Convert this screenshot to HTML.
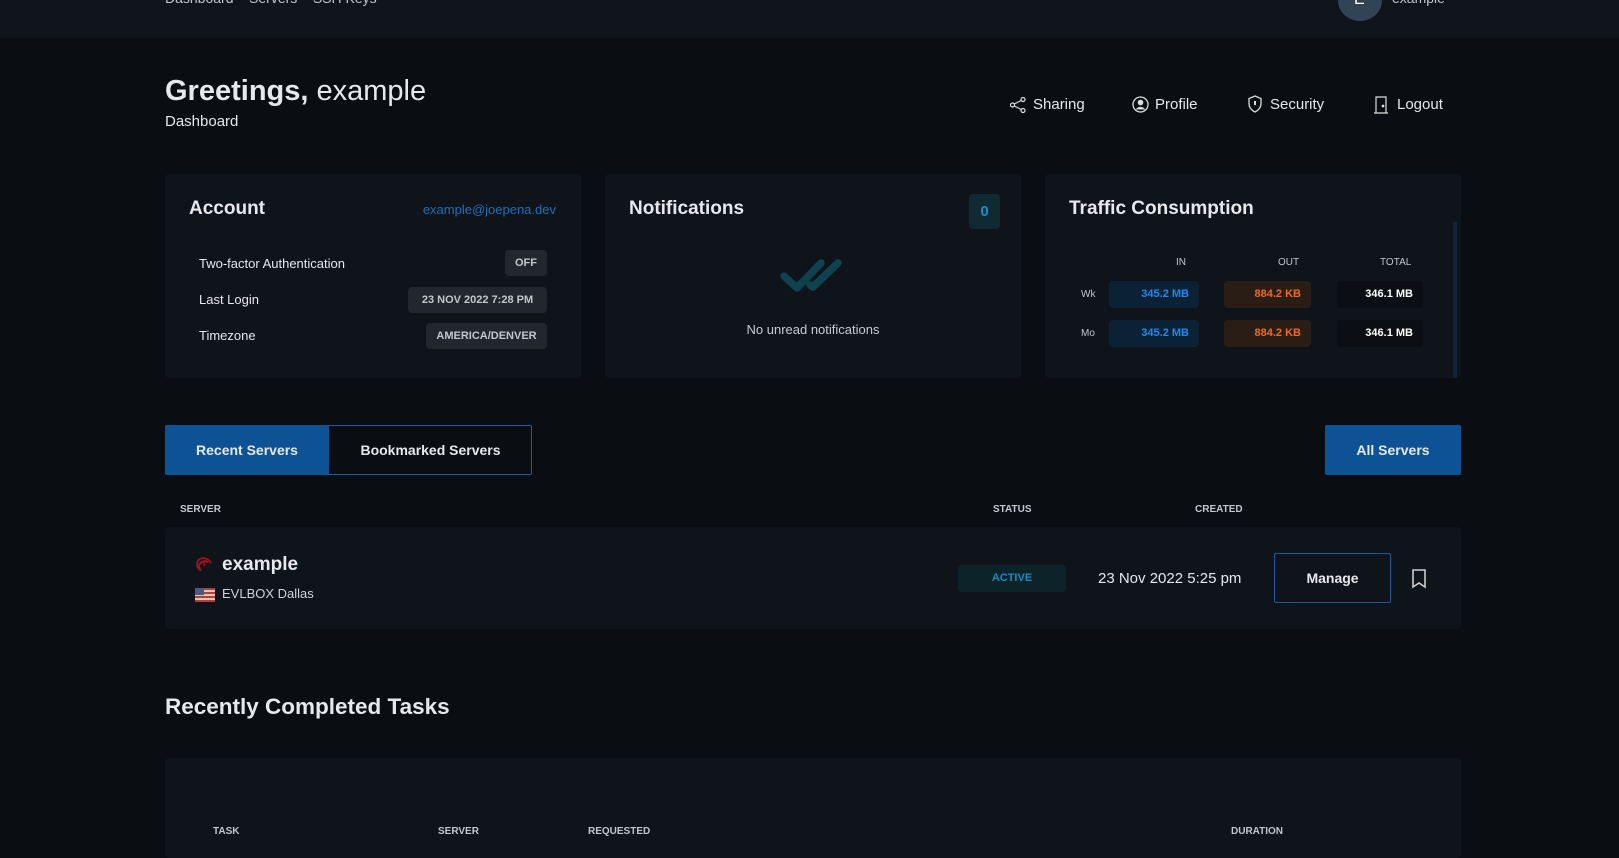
<!DOCTYPE html>
<html><head><meta charset="utf-8"><style>
*{margin:0;padding:0;box-sizing:border-box}
body{width:1619px;height:843px;overflow:hidden;background:#0a0d12;font-family:"Liberation Sans",sans-serif;color:#e6e8eb;position:relative}
.a{position:absolute;white-space:nowrap}
.card{position:absolute;background:#0f131a;border-radius:4px}
.badge{position:absolute;height:26px;line-height:26px;background:#22262e;border-radius:4px;color:#c3c6cc;font-weight:bold;font-size:11px;text-align:center}
.pill{position:absolute;height:27px;line-height:27px;border-radius:4px;font-weight:bold;font-size:11px;text-align:right;padding-right:10px}
.th{font-size:10px;font-weight:bold;color:#c3c6cc}
.nav{font-size:15px;color:#e6e8eb}
</style></head><body>
<div class="a" style="left:0;top:0;width:1619px;height:38px;background:#10141b"></div>
<div class="a" style="left:165px;top:-10px;font-size:14px;color:#c3c6cc">Dashboard&nbsp;&nbsp;&nbsp;&nbsp;Servers&nbsp;&nbsp;&nbsp;&nbsp;SSH Keys</div>
<div class="a" style="left:1338px;top:-20px;width:44px;height:41px;border-radius:50%;background:#334356"></div>
<div class="a" style="left:1354px;top:-9px;font-size:16px;color:#fff">E</div>
<div class="a" style="left:1392px;top:-10px;font-size:14px;color:#c3c6cc">example</div>

<div class="a" style="left:165px;top:75px;font-size:29px"><b>Greetings,</b> example</div>
<div class="a" style="left:165px;top:113px;font-size:15px">Dashboard</div>

<svg class="a" style="left:1009px;top:96px" width="18" height="18" viewBox="0 0 18 18" fill="none" stroke="#ddd" stroke-width="1.2"><circle cx="14" cy="3.5" r="2"/><circle cx="3.5" cy="9" r="2"/><circle cx="14" cy="14.5" r="2"/><path d="M5.3 8 12.2 4.5M5.3 10 12.2 13.5"/></svg>
<div class="a nav" style="left:1033px;top:96px">Sharing</div>
<svg class="a" style="left:1132px;top:96px" width="17" height="17" viewBox="0 0 17 17"><circle cx="8.5" cy="8.5" r="7.5" fill="none" stroke="#ddd" stroke-width="1.3"/><circle cx="8.5" cy="6.5" r="2.8" fill="#ddd"/><path d="M3.5 13.5Q8.5 8 13.5 13.5" fill="#ddd"/></svg>
<div class="a nav" style="left:1155px;top:96px">Profile</div>
<svg class="a" style="left:1247px;top:95px" width="16" height="18" viewBox="0 0 16 18" fill="none" stroke="#ddd" stroke-width="1.3"><path d="M8 1 14 3.5V8.5Q14 14 8 17Q2 14 2 8.5V3.5Z"/><path d="M8 6v4" stroke-width="2"/></svg>
<div class="a nav" style="left:1270px;top:96px">Security</div>
<svg class="a" style="left:1374px;top:96px" width="14" height="18" viewBox="0 0 14 18" fill="none" stroke="#ddd" stroke-width="1.2"><path d="M2 17V1h10v16M0 17h14"/><circle cx="9" cy="10" r=".8" fill="#ddd"/></svg>
<div class="a nav" style="left:1397px;top:96px">Logout</div>

<div class="card" style="left:165px;top:174px;width:416px;height:204px"></div>
<div class="a" style="left:189px;top:198px;font-size:19px;font-weight:bold">Account</div>
<div class="a" style="right:1063px;top:202px;font-size:13px;color:#1e6fb5">example@joepena.dev</div>
<div class="a" style="left:199px;top:256px;font-size:13px">Two-factor Authentication</div>
<div class="a" style="left:199px;top:292px;font-size:13px">Last Login</div>
<div class="a" style="left:199px;top:328px;font-size:13px">Timezone</div>
<div class="badge" style="left:505px;top:250px;width:42px">OFF</div>
<div class="badge" style="left:408px;top:287px;width:139px">23 NOV 2022 7:28 PM</div>
<div class="badge" style="left:426px;top:323px;width:121px">AMERICA/DENVER</div>

<div class="card" style="left:605px;top:174px;width:416px;height:204px"></div>
<div class="a" style="left:629px;top:198px;font-size:19px;font-weight:bold">Notifications</div>
<div class="a" style="left:969px;top:194px;width:31px;height:35px;line-height:35px;text-align:center;background:#0f2a33;border-radius:4px;color:#1a8cc4;font-weight:bold;font-size:15px">0</div>
<svg class="a" style="left:780px;top:258px" width="68" height="40" viewBox="0 0 68 40" fill="none" stroke="#0f4250" stroke-width="7.5" stroke-linecap="round" stroke-linejoin="round"><path d="M4 18 17 30 41 5"/><path d="M30 27 33 29 58 5"/></svg>
<div class="a" style="left:605px;width:416px;text-align:center;top:322px;font-size:13px;color:#c8ccd2">No unread notifications</div>

<div class="card" style="left:1045px;top:174px;width:416px;height:204px"></div>
<div class="a" style="left:1453px;top:222px;width:4px;height:156px;background:#13243a"></div>
<div class="a" style="left:1069px;top:198px;font-size:19px;font-weight:bold">Traffic Consumption</div>
<div class="a" style="left:1176px;top:257px;font-size:10px;color:#c3c6cc">IN</div>
<div class="a" style="left:1278px;top:257px;font-size:10px;color:#c3c6cc">OUT</div>
<div class="a" style="left:1380px;top:257px;font-size:10px;color:#c3c6cc">TOTAL</div>
<div class="a" style="left:1081px;top:289px;font-size:10px;color:#c3c6cc">Wk</div>
<div class="a" style="left:1081px;top:328px;font-size:10px;color:#c3c6cc">Mo</div>
<div class="pill" style="left:1109px;top:281px;width:90px;background:#0b2136;color:#1a8cf0">345.2 MB</div>
<div class="pill" style="left:1224px;top:281px;width:87px;background:#2a1d16;color:#f06a1a">884.2 KB</div>
<div class="pill" style="left:1337px;top:281px;width:86px;background:#0b0e12;color:#fff">346.1 MB</div>
<div class="pill" style="left:1109px;top:320px;width:90px;background:#0b2136;color:#1a8cf0">345.2 MB</div>
<div class="pill" style="left:1224px;top:320px;width:87px;background:#2a1d16;color:#f06a1a">884.2 KB</div>
<div class="pill" style="left:1337px;top:320px;width:86px;background:#0b0e12;color:#fff">346.1 MB</div>

<div class="a" style="left:165px;top:425px;width:367px;height:50px;border:1px solid #1660a8;border-radius:2px"></div>
<div class="a" style="left:165px;top:425px;width:164px;height:50px;background:#0e5296;border-radius:2px 0 0 2px;line-height:50px;text-align:center;font-weight:bold;font-size:14px">Recent Servers</div>
<div class="a" style="left:329px;top:425px;width:203px;height:50px;line-height:50px;text-align:center;font-weight:bold;font-size:14px">Bookmarked Servers</div>
<div class="a" style="left:1325px;top:425px;width:136px;height:50px;background:#0e5296;border-radius:2px;line-height:50px;text-align:center;font-weight:bold;font-size:14px">All Servers</div>

<div class="a th" style="left:180px;top:504px">SERVER</div>
<div class="a th" style="left:993px;top:504px">STATUS</div>
<div class="a th" style="left:1195px;top:504px">CREATED</div>

<div class="card" style="left:165px;top:527px;width:1296px;height:102px"></div>
<svg class="a" style="left:195px;top:555px" width="19" height="19" viewBox="0 0 19 19" fill="none" stroke="#a0141e" stroke-width="1.8"><path d="M10 10.5a2.3 2.3 0 1 1 3-3A5 5 0 1 0 6 15.5 7 7 0 0 1 4 4.5a8 8 0 0 1 12 4"/></svg>
<div class="a" style="left:222px;top:554px;font-size:19px;font-weight:bold">example</div>
<svg class="a" style="left:195px;top:588px" width="20" height="14" viewBox="0 0 20 14"><rect width="20" height="14" fill="#d9c9b0"/><g fill="#b04040"><rect y="0" width="20" height="2"/><rect y="4" width="20" height="2"/><rect y="8" width="20" height="2"/><rect y="12" width="20" height="2"/></g><rect width="9" height="7" fill="#4a5a80"/></svg>
<div class="a" style="left:222px;top:586px;font-size:13px;color:#d0d3d8">EVLBOX Dallas</div>
<div class="a" style="left:958px;top:565px;width:108px;height:27px;line-height:27px;text-align:center;background:#0c2329;border-radius:4px;color:#1a8ac0;font-weight:bold;font-size:11px">ACTIVE</div>
<div class="a" style="left:1098px;top:570px;font-size:15px">23 Nov 2022 5:25 pm</div>
<div class="a" style="left:1274px;top:553px;width:117px;height:50px;border:1px solid #1a5a9a;border-radius:2px;line-height:48px;text-align:center;font-weight:bold;font-size:14px">Manage</div>
<svg class="a" style="left:1411px;top:569px" width="16" height="20" viewBox="0 0 16 20" fill="none" stroke="#ccc" stroke-width="1.6"><path d="M2 1h12v17l-6-4-6 4z"/></svg>

<div class="a" style="left:165px;top:694px;font-size:22.5px;font-weight:bold">Recently Completed Tasks</div>
<div class="card" style="left:165px;top:758px;width:1296px;height:100px"></div>
<div class="a th" style="left:213px;top:826px">TASK</div>
<div class="a th" style="left:438px;top:826px">SERVER</div>
<div class="a th" style="left:588px;top:826px">REQUESTED</div>
<div class="a th" style="left:1231px;top:826px">DURATION</div>
</body></html>
